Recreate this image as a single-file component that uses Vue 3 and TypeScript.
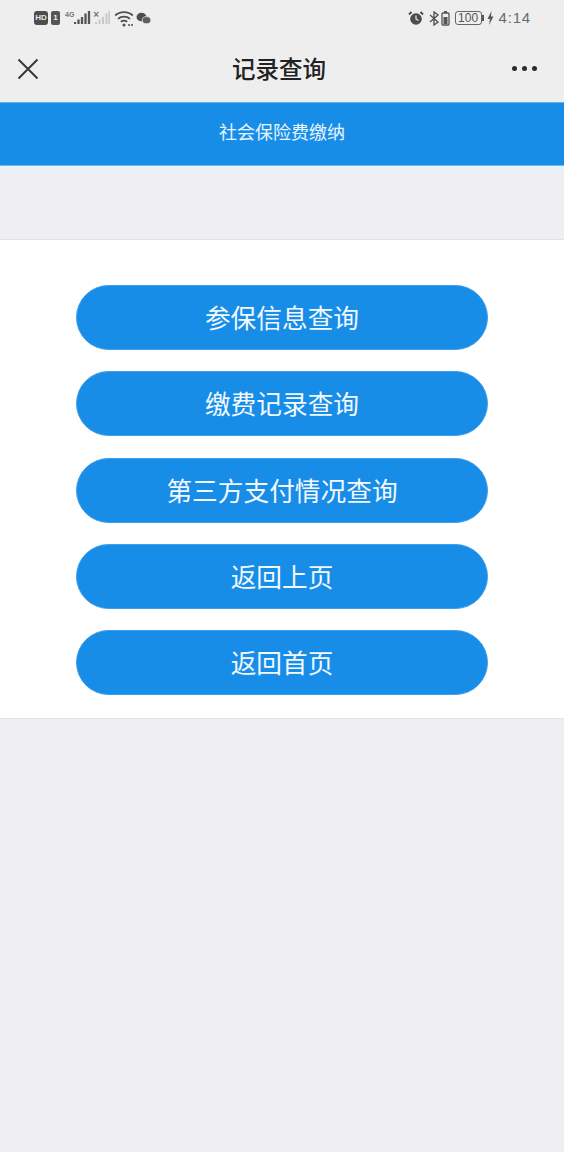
<script setup lang="ts">
const actions: string[] = ['参保信息查询', '缴费记录查询', '第三方支付情况查询', '返回上页', '返回首页']
</script>

<template>
  <div class="page">
    <header class="top">
      <div class="status">
        <div class="status-group">
          <span class="hd">HD</span>
          <span class="sim">1</span>
          <span class="net">4G</span>
          <svg class="signal" width="17" height="14" viewBox="0 0 17 14"><path d="M1 14v-2M4.500 14v-4.500M8 14v-7M11.500 14V3.500M15 14V1" stroke="#555" stroke-width="2.300" fill="none"/></svg>
          <span class="net faint">×</span>
          <svg class="signal" width="15" height="14" viewBox="0 0 15 14"><path d="M1 14v-2M4.500 14v-4.500M8 14v-7M11.500 14V3.500M14.500 14V1" stroke="#c8c8c8" stroke-width="2" fill="none"/></svg>
          <svg class="wifi" width="20" height="17" viewBox="0 0 20 17"><path d="M1.200 5.500C6 1 14 1 18.800 5.500M4 8.800c3.400-3 8.600-3 12 0M6.800 11.800c1.800-1.400 4.600-1.400 6.400 0" stroke="#4d4d4d" stroke-width="1.800" fill="none"/><circle cx="10" cy="15" r="1.500" fill="#4d4d4d"/><circle cx="15" cy="15" r="1" fill="#4d4d4d"/><circle cx="18" cy="15" r="1" fill="#4d4d4d"/></svg>
          <svg width="15" height="13" viewBox="0 0 15 13"><ellipse cx="5.500" cy="5" rx="5" ry="4.300" fill="#4d4d4d"/><ellipse cx="10.500" cy="8.200" rx="4.300" ry="3.600" fill="#5f5f5f" stroke="#eeeeee" stroke-width=".8"/></svg>
        </div>
        <div class="status-group right">
          <svg class="alarm" width="16" height="15" viewBox="0 0 16 15"><circle cx="8" cy="8" r="5.800" fill="#4d4d4d"/><path d="M1 3.500 3.500 1M15 3.500 12.500 1" stroke="#4d4d4d" stroke-width="2"/><path d="M8 4.500V8l2.500 1.500" stroke="#eee" stroke-width="1.200" fill="none"/></svg>
          <svg class="bt" width="10" height="15" viewBox="0 0 10 15"><path d="M1 4l8 7-4 3V1l4 3-8 7" stroke="#555" stroke-width="1.400" fill="none"/></svg>
          <svg class="cell" width="9" height="15" viewBox="0 0 9 15"><path d="M3 0h3v2H3z" fill="#555"/><rect x="1" y="2" width="7" height="12" rx="1" fill="none" stroke="#555" stroke-width="1.300"/><rect x="2.500" y="6" width="4" height="7" fill="#555"/></svg>
          <span class="battery">100</span><span class="nub"></span>
          <svg class="bolt" width="7" height="14" viewBox="0 0 7 14"><path d="M4.500 0 .5 8h2.500L2 14l4.500-8.500H4z" fill="#555"/></svg>
          <span class="time">4:14</span>
        </div>
      </div>
      <nav class="nav">
        <svg width="22" height="22" viewBox="0 0 22 22"><path d="M1.500 1.500l19 19M20.500 1.500l-19 19" stroke="#383838" stroke-width="2" fill="none"/></svg>
        <h1 class="title">记录查询</h1>
        <div class="more"><i></i><i></i><i></i></div>
      </nav>
    </header>

    <div class="banner">社会保险费缴纳</div>

    <main class="panel">
      <button v-for="label in actions" :key="label" class="action" type="button">{{ label }}</button>
    </main>
  </div>
</template>

<style scoped>
.page {
  min-height: 1152px;
  background: #eeeef3;
  font-family: "Noto Sans CJK SC", "Liberation Sans", sans-serif;
  display: flex;
  flex-direction: column;
}
.top {
  height: 102px;
  background: #eeeeee;
  display: flex;
  flex-direction: column;
}
.status {
  height: 36px;
  padding: 0 33px 0 34px;
  display: flex;
  justify-content: space-between;
  align-items: center;
  box-sizing: border-box;
}
.status-group {
  display: flex;
  align-items: center;
  gap: 2px;
  color: #555;
}
.status-group.right {
  gap: 0;
}
.hd {
  width: 14px;
  height: 14px;
  background: #4d4d4d;
  border-radius: 3px;
  color: #e8e8e8;
  font: bold 8px/14px "Liberation Sans", sans-serif;
  text-align: center;
}
.sim {
  width: 9px;
  height: 14px;
  margin-left: 1px;
  background: #555;
  border-radius: 2px;
  color: #eee;
  font: bold 8px/14px "Liberation Sans", sans-serif;
  text-align: center;
  margin-right: 3px;
}
.net {
  font: bold 7px/8px "Liberation Sans", sans-serif;
  align-self: flex-start;
  margin-top: 1px;
  margin-right: -2px;
  color: #777;
}
.net.faint {
  font-size: 10px;
  margin-left: 0;
  margin-right: -6px;
}
.signal {
  margin-top: -2px;
}
.wifi {
  margin-left: 2px;
}
.bt {
  margin-left: 5px;
}
.cell {
  margin-left: 2px;
}
.battery {
  width: 27px;
  height: 14px;
  margin-left: 5px;
  border: 1.300px solid #666;
  border-radius: 3px;
  box-sizing: border-box;
  font: 12px/12px "Liberation Sans", sans-serif;
  text-align: center;
}
.nub {
  width: 2px;
  height: 6px;
  background: #555;
}
.bolt {
  margin-left: 3px;
}
.time {
  margin-left: 5px;
  font: 15px/16px "Liberation Sans", sans-serif;
  color: #6a6a6a;
  letter-spacing: 0.8px;
}
.nav {
  flex: 1;
  padding: 0 27px 0 17px;
  display: flex;
  align-items: center;
  justify-content: space-between;
  position: relative;
}
.title {
  margin: 0;
  font-size: 23.500px;
  font-weight: 500;
  color: #222;
  position: absolute;
  left: 232px;
  top: 14px;
  line-height: 36px;
}
.more {
  display: flex;
  gap: 5px;
  padding-bottom: 2px;
}
.more i {
  width: 5px;
  height: 5px;
  border-radius: 50%;
  background: #2a2a2a;
}
.banner {
  height: 64px;
  box-sizing: border-box;
  background: #188de8;
  border-top: 1px solid #5fb0f0;
  border-bottom: 1px solid #6db8f2;
  color: #e6f5ff;
  font-size: 18px;
  line-height: 56px;
  text-align: center;
  box-shadow: 0 6px 6px #e8f0fa;
}
.panel {
  margin-top: 73px;
  height: 480px;
  box-sizing: border-box;
  padding: 45px 76px 0;
  background: #fff;
  border-top: 1px solid #e3e3e6;
  border-bottom: 1px solid #e3e3e6;
  display: flex;
  flex-direction: column;
  gap: 21.250px;
}
.action {
  height: 65px;
  flex: none;
  border: 1px solid #3ea0ec;
  border-radius: 33px;
  background: #188de8;
  color: #f2f9ff;
  font-family: inherit;
  font-size: 25.700px;
  padding: 0 0 2px;
}
</style>
